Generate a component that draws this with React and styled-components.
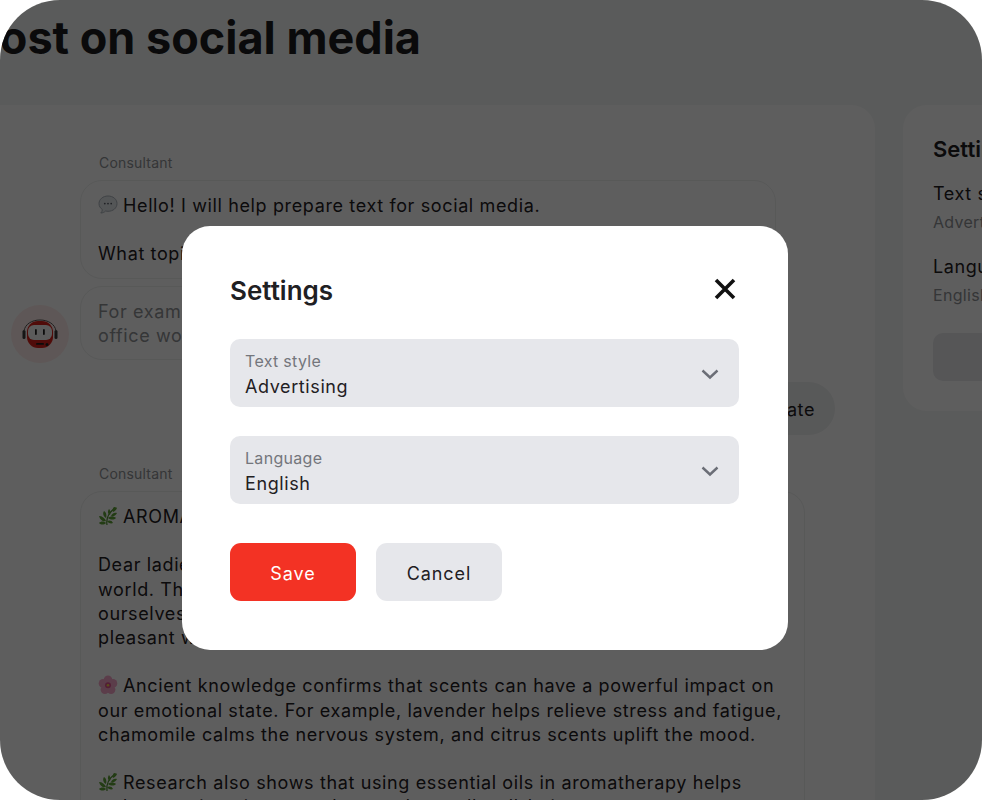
import React from "react";
import styled, { createGlobalStyle } from "styled-components";

const GlobalStyle = createGlobalStyle`
  html, body {
    margin: 0;
    padding: 0;
    background: #fff;
  }
  * {
    box-sizing: border-box;
  }
`;

const Screen = styled.div`
  position: relative;
  width: 982px;
  height: 800px;
  overflow: hidden;
  border-radius: 60px;
  background: #f5f7f6;
  font-family: Inter, "Liberation Sans", sans-serif;
  color: #1f2023;
`;

const Header = styled.div`
  height: 105px;
  margin-left: -29px;
  padding-top: 10px;
`;

const PageTitle = styled.h1`
  margin: 0;
  font-size: 45px;
  line-height: 56px;
  font-weight: 700;
  white-space: nowrap;
  color: #1b1c1e;
`;

const Workspace = styled.div`
  display: flex;
  gap: 28px;
  margin-left: -29px;
  width: 1300px;
  align-items: flex-start;
`;

const ChatPanel = styled.div`
  flex: none;
  width: 904px;
  height: 900px;
  padding: 49px 40px 0;
  background: #fff;
  border-radius: 24px;
`;

const SidePanel = styled.div`
  flex: none;
  width: 300px;
  padding: 30px;
  background: #fff;
  border-radius: 24px;
`;

const SideTitle = styled.div`
  font-size: 22px;
  line-height: 28px;
  font-weight: 600;
  margin-bottom: 19px;
`;

const SideLabel = styled.div`
  font-size: 18px;
  line-height: 24px;
  letter-spacing: 0.6px;
  white-space: nowrap;
`;

const SideValue = styled.div`
  margin: 5px 0 22px;
  font-size: 16px;
  line-height: 22px;
  letter-spacing: 0.3px;
  color: #8f9296;
  white-space: nowrap;
`;

const SideButton = styled.div`
  height: 48px;
  margin-top: 27px;
  border-radius: 10px;
  background: #e8e9ec;
`;

const Sender = styled.div`
  margin: 0 0 ${(p) => p.$gap}px 88px;
  font-size: 14px;
  line-height: 18px;
  letter-spacing: 0.2px;
  color: #8f9296;
`;

const MessageRow = styled.div`
  display: flex;
  align-items: flex-end;
  gap: 11px;
`;

const Avatar = styled.div`
  flex: none;
  width: 58px;
  height: 58px;
  margin-bottom: -3px;
  display: flex;
  align-items: center;
  justify-content: center;
  border-radius: 50%;
  background: #ffeceb;
`;

const Stack = styled.div`
  display: flex;
  flex-direction: column;
  gap: 7px;
`;

const Bubble = styled.div`
  width: ${(p) => p.$width}px;
  margin-left: ${(p) => p.$indent || 0}px;
  padding: 13px 17px 11px;
  border: 1px solid #eef0ef;
  border-radius: 22px;
  font-size: 18px;
  line-height: 24.2px;
  letter-spacing: 0.63px;
  white-space: nowrap;
  color: ${(p) => (p.$muted ? "#8f9296" : "#1f2023")};
`;

const ActionRow = styled.div`
  display: flex;
  justify-content: flex-end;
  margin: 22px 0 30px;
`;

const GhostButton = styled.div`
  height: 53px;
  padding: 1px 20px 0;
  display: flex;
  align-items: center;
  border-radius: 27px;
  background: #eff0f1;
  font-size: 18px;
  letter-spacing: 0.6px;
`;

const EmojiIcon = styled.svg`
  display: inline-block;
  width: 20px;
  height: 20px;
  margin-right: 5px;
  vertical-align: -3px;
`;

const Overlay = styled.div`
  position: absolute;
  inset: 0;
  padding: 226px 0 0 182px;
  background: rgba(0, 0, 0, 0.63);
`;

const Modal = styled.div`
  width: 606px;
  height: 424px;
  padding: 48px 49px 48px 48px;
  background: #fff;
  border-radius: 28px;
`;

const ModalHeader = styled.div`
  display: flex;
  align-items: center;
  justify-content: space-between;
  height: 32px;
  margin-bottom: 33px;
`;

const ModalTitle = styled.div`
  font-size: 26px;
  line-height: 33px;
  font-weight: 600;
  color: #1f2023;
`;

const CloseIcon = styled.svg`
  display: block;
  width: 24px;
  height: 24px;
  margin: -2px 2px 0 0;
`;

const Field = styled.div`
  display: flex;
  align-items: center;
  justify-content: space-between;
  height: 68px;
  margin-bottom: 29px;
  padding: 3px 20px 0 15px;
  border-radius: 10px;
  background: #e6e7eb;
`;

const FieldText = styled.div`
  display: flex;
  flex-direction: column;
  gap: 2px;
`;

const FieldLabel = styled.div`
  font-size: 16px;
  line-height: 22px;
  letter-spacing: 0.3px;
  color: #74767c;
`;

const FieldValue = styled.div`
  font-size: 18px;
  line-height: 26px;
  letter-spacing: 0.6px;
  color: #1f2023;
`;

const Chevron = styled.svg`
  display: block;
  width: 18px;
  height: 12px;
  margin-top: -2px;
`;

const ModalActions = styled.div`
  display: flex;
  gap: 20px;
  margin-top: 39px;
`;

const Button = styled.div`
  width: 126px;
  height: 58px;
  padding-top: 2px;
  display: flex;
  align-items: center;
  justify-content: center;
  border-radius: 11px;
  font-size: 18px;
  letter-spacing: 0.9px;
  background: ${(p) => (p.$primary ? "#f33224" : "#e6e7eb")};
  color: ${(p) => (p.$primary ? "#fff" : "#1f2023")};
`;

const ChatEmoji = () => (
  <EmojiIcon viewBox="0 0 20 20">
    <path d="M10 1C4.900 1 1 4.300 1 8.600c0 2.500 1.300 4.600 3.400 6-.1 1.400-.8 2.600-1.600 3.400 1.900 0 3.600-.8 4.800-2 .8.2 1.600.3 2.400.3 5.100 0 9-3.300 9-7.700S15.100 1 10 1z" fill="#e4e8ec" stroke="#aab2ba" strokeWidth="1" />
    <circle cx="6.800" cy="8.600" r="0.900" fill="#5a6068" />
    <circle cx="10" cy="8.600" r="0.900" fill="#5a6068" />
    <circle cx="13.200" cy="8.600" r="0.900" fill="#5a6068" />
  </EmojiIcon>
);

const HerbEmoji = () => (
  <EmojiIcon viewBox="0 0 20 20">
    <path d="M9 19C8 13 10 7 17 2" fill="none" stroke="#4c8c2b" strokeWidth="1.200" />
    <path d="M16 1c2 0 3 1 3 1s-1 3-4 4c-1-2 0-4 1-5zM11 3c1 1 2 3 1 6-2-1-3-3-1-6zM19 7c-1 2-3 4-6 3 1-2 3-4 6-3zM6 5c2 1 3 4 2 7-2-1-4-4-2-7zM18 12c-2 2-5 2-8 0 2-2 6-2 8 0zM1 10c3 0 6 2 7 5-3 1-6-1-7-5zM15 17c-2 1-5 0-6-2 2-1 5-1 6 2zM1 17c2-2 5-2 7 0-2 2-5 2-7 0z" fill="#5fa336" />
  </EmojiIcon>
);

const FlowerEmoji = () => (
  <EmojiIcon viewBox="0 0 20 20">
    <g fill="#f7a6c9">
      <circle cx="10" cy="4.800" r="4.300" />
      <circle cx="15" cy="8.400" r="4.300" />
      <circle cx="13.100" cy="14.600" r="4.300" />
      <circle cx="6.900" cy="14.600" r="4.300" />
      <circle cx="5" cy="8.400" r="4.300" />
    </g>
    <circle cx="10" cy="10.300" r="3" fill="#e0568f" />
    <circle cx="10" cy="10.300" r="1.300" fill="#f6d04d" />
  </EmojiIcon>
);

const RobotAvatar = () => (
  <svg width="36" height="30" viewBox="0 0 36 30">
    <rect x="0.500" y="11" width="3" height="9" rx="1.500" fill="#3a3a3a" />
    <rect x="32.500" y="11" width="3" height="9" rx="1.500" fill="#3a3a3a" />
    <path d="M2 12C3 5 10 1 18 1s15 4 16 11" fill="none" stroke="#555" strokeWidth="1" />
    <rect x="5" y="2" width="26" height="27" rx="11" fill="#d9221b" />
    <rect x="6" y="6" width="24" height="15" rx="6" fill="#f6f6f6" />
    <rect x="13" y="10" width="1.800" height="6" rx="0.900" fill="#222" />
    <rect x="21" y="10" width="1.800" height="6" rx="0.900" fill="#222" />
    <rect x="14" y="24" width="8" height="1.800" rx="0.900" fill="#222" />
    <circle cx="25" cy="25.500" r="1.500" fill="#222" />
  </svg>
);

const ChevronIcon = () => (
  <Chevron viewBox="0 0 18 12" fill="none">
    <path d="M1.500 2.500L9 9.500l7.500-7" stroke="#6b6e76" strokeWidth="2.400" />
  </Chevron>
);

const App = () => {
  return (
    <>
      <GlobalStyle />
      <Screen>
        <Header>
          <PageTitle>Post on social media</PageTitle>
        </Header>
        <Workspace>
          <ChatPanel>
            <Sender $gap={8}>Consultant</Sender>
            <MessageRow>
              <Avatar>
                <RobotAvatar />
              </Avatar>
              <Stack>
                <Bubble $width={696}>
                  <ChatEmoji />
                  Hello! I will help prepare text for social media.
                  <br />
                  <br />
                  What topic would you like to write about?
                </Bubble>
                <Bubble $width={696} $muted>
                  For example: aromatherapy and its benefits for
                  <br />
                  office workers
                </Bubble>
              </Stack>
            </MessageRow>
            <ActionRow>
              <GhostButton>Generate</GhostButton>
            </ActionRow>
            <Sender $gap={8}>Consultant</Sender>
            <Bubble $width={725} $indent={69}>
              <HerbEmoji />
              AROMATHERAPY: THE MAGIC OF SCENTS
              <br />
              <br />
              Dear ladies and gentlemen! Today we open the door to a fragrant
              <br />
              world. There are many ways to take care of
              <br />
              ourselves, and aromatherapy is one of the most
              <br />
              pleasant ways to do so.
              <br />
              <br />
              <FlowerEmoji />
              Ancient knowledge confirms that scents can have a powerful impact on
              <br />
              our emotional state. For example, lavender helps relieve stress and fatigue,
              <br />
              chamomile calms the nervous system, and citrus scents uplift the mood.
              <br />
              <br />
              <HerbEmoji />
              Research also shows that using essential oils in aromatherapy helps
              <br />
              reduce anxiety, improve sleep and overall well-being.
            </Bubble>
          </ChatPanel>
          <SidePanel>
            <SideTitle>Settings</SideTitle>
            <SideLabel>Text style</SideLabel>
            <SideValue>Advertising</SideValue>
            <SideLabel>Language</SideLabel>
            <SideValue>English</SideValue>
            <SideButton />
          </SidePanel>
        </Workspace>
        <Overlay>
          <Modal>
            <ModalHeader>
              <ModalTitle>Settings</ModalTitle>
              <CloseIcon viewBox="0 0 24 24" fill="none">
                <path d="M3 3l18 18M21 3L3 21" stroke="#111" strokeWidth="3.600" />
              </CloseIcon>
            </ModalHeader>
            <Field>
              <FieldText>
                <FieldLabel>Text style</FieldLabel>
                <FieldValue>Advertising</FieldValue>
              </FieldText>
              <ChevronIcon />
            </Field>
            <Field>
              <FieldText>
                <FieldLabel>Language</FieldLabel>
                <FieldValue>English</FieldValue>
              </FieldText>
              <ChevronIcon />
            </Field>
            <ModalActions>
              <Button $primary>Save</Button>
              <Button>Cancel</Button>
            </ModalActions>
          </Modal>
        </Overlay>
      </Screen>
    </>
  );
};

export default App;
